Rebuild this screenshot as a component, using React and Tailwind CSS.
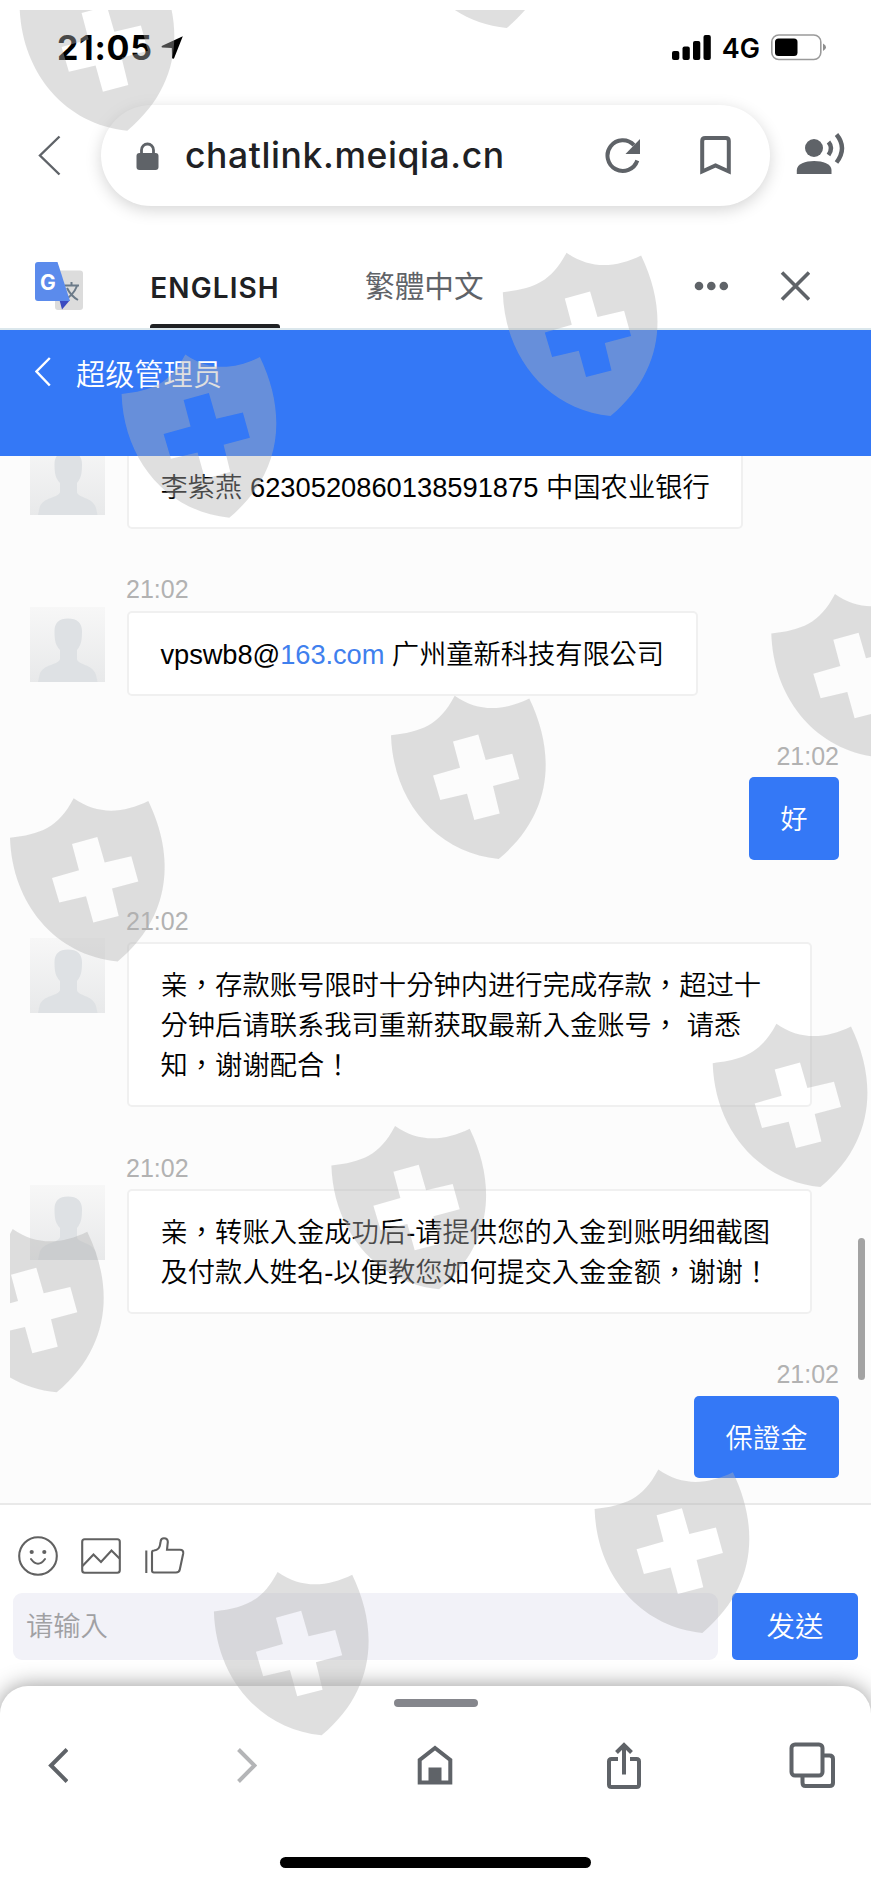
const messages = [
    { id: 1, side: 'left', parts: ['李紫燕 6230520860138591875 中国农业银行'] },
    { id: 2, side: 'left', time: '21:02', parts: ['vpswb8@', { link: '163.com' }, ' 广州童新科技有限公司'] },
    { id: 3, side: 'right', time: '21:02', parts: ['好'] },
    {
        id: 4,
        side: 'left',
        time: '21:02',
        parts: ['亲，存款账号限时十分钟内进行完成存款，超过十\n分钟后请联系我司重新获取最新入金账号， 请悉\n知，谢谢配合！'],
    },
    {
        id: 5,
        side: 'left',
        time: '21:02',
        parts: ['亲，转账入金成功后-请提供您的入金到账明细截图\n及付款人姓名-以便教您如何提交入金金额，谢谢！'],
    },
    { id: 6, side: 'right', time: '21:02', parts: ['保證金'] },
];

// top left corner of every shield on the page
const shields = [
    [19.6, -32.6],
    [399, -135.3],
    [502.8, 252.7],
    [121.6, 354.4],
    [771.3, 594],
    [391, 695.7],
    [10, 798.3],
    [712.7, 1023.7],
    [331.4, 1126],
    [-51, 1229],
    [594.6, 1469.6],
    [213.9, 1572],
];

function Watermark() {
    return (
        <svg className="pointer-events-none absolute inset-0" width="871" height="1884" viewBox="0 0 871 1884" aria-hidden="true">
            <clipPath id="watermark-area">
                <rect x="10" y="10" width="861" height="1874" />
            </clipPath>
            <g clipPath="url(#watermark-area)" fill="#b1b1b1" fillOpacity="0.41" fillRule="evenodd">
                {shields.map(([x, y]) => (
                    <path
                        key={`${x}-${y}`}
                        transform={`translate(${x} ${y})`}
                        d="M0 39.5C30 36 48 30 63.7 0C88 17 113 15 138.3 2.7C165 58 162 118 107.7 163.3C45 157 2 105 0 39.5ZM62 45.7L69 72L42 79.7L49.3 104.3L76 98L83.3 124.3L108.7 117.7L102 90.3L128.3 83.3L121.3 58L94.7 64.3L87.3 38.7Z"
                    />
                ))}
            </g>
        </svg>
    );
}

function StatusBar() {
    return (
        <div className="flex h-[105px] items-start pt-[34px] pr-[44px] pl-[57px] text-black">
            <span className="w-[95px] text-[34px] leading-[28px] font-bold tracking-[0.7px] whitespace-nowrap">21:05</span>
            <svg className="mt-[1px] ml-[9px]" width="24" height="25" viewBox="0 0 24 25">
                <path d="M21.8 1.2L1.2 10.8Q-0.2 12 1.4 12.6L10.8 13L11 22.8Q11.8 24.8 13.2 23Z" />
            </svg>
            <svg className="mt-[1px] ml-auto" width="40" height="26" viewBox="0 0 40 26">
                <rect x="0" y="16" width="7.3" height="9" rx="2" />
                <rect x="10.5" y="11.5" width="7.3" height="13.5" rx="2" />
                <rect x="21" y="6" width="7.3" height="19" rx="2" />
                <rect x="31.5" y="0" width="7.3" height="25" rx="2" />
            </svg>
            <span className="ml-[10px] text-[27px] leading-[30px] font-semibold">4G</span>
            <svg className="ml-[11px]" width="56" height="27" viewBox="0 0 56 27">
                <rect x="0.8" y="1" width="49" height="24.5" rx="7" fill="none" stroke="#9a9a9a" strokeWidth="1.6" />
                <rect x="4" y="4.5" width="22.5" height="17.5" rx="3.5" />
                <path d="M52 9.5Q55 11 55 13.2T52 17Z" fill="#8e8e8e" />
            </svg>
        </div>
    );
}

function AddressBar() {
    return (
        <div className="flex h-[101px] items-center text-[#5f6368]">
            <svg className="ml-[38px]" width="23" height="42" viewBox="0 0 23 42" fill="none" stroke="#5f6368" strokeWidth="2.4">
                <path d="M21.5 1.5L2 20.5L21.5 39.5" />
            </svg>
            <div className="ml-[40px] flex h-[101px] w-[669px] items-center rounded-full bg-white shadow-[0_4px_16px_rgba(0,0,0,0.17)]">
                <svg className="ml-[35px]" width="23" height="28" viewBox="0 0 23 28">
                    <rect x="0.5" y="11" width="22" height="17" rx="3" fill="#5f6368" />
                    <path d="M5.5 12V8a6 6 0 0 1 12 0v4" fill="none" stroke="#5f6368" strokeWidth="2.8" />
                </svg>
                <span className="ml-[26px] w-[340px] text-[35.5px] leading-[44px] font-medium tracking-[0.6px] whitespace-nowrap text-[#202124]">
                    chatlink.meiqia.cn
                </span>
                <svg className="ml-[80px]" width="36" height="36" viewBox="0 0 36 36">
                    <path d="M32.3 22.5A15.3 15.3 0 1 1 29 7.2" fill="none" stroke="#5f6368" strokeWidth="4" />
                    <path d="M35 1V16H20.5Z" fill="#5f6368" />
                </svg>
                <svg className="ml-[59px]" width="31" height="39" viewBox="0 0 31 39" fill="none" stroke="#5f6368" strokeWidth="4">
                    <path d="M2.2 35.5V5Q2.2 2 5.2 2H25.8Q28.8 2 28.8 5V35.5L15.5 29.5Z" />
                </svg>
            </div>
            <svg className="ml-[26px] -mt-[3px]" width="50" height="42" viewBox="0 0 50 42">
                <circle cx="18" cy="15" r="9" fill="#5f6368" />
                <path d="M0.8 41V37C0.8 25 35.5 25 35.5 37V41Z" fill="#5f6368" />
                <path d="M32.5 9Q37.5 15 32.5 22" fill="none" stroke="#5f6368" strokeWidth="4.4" />
                <path d="M40.5 1.5Q51.5 15 40.5 29.5" fill="none" stroke="#5f6368" strokeWidth="4.4" />
            </svg>
        </div>
    );
}

function TranslateBar() {
    return (
        <div className="mt-[44px] flex h-[80px] items-start border-b-2 border-[#dbe7ec]">
            <svg className="mt-[12px] ml-[35px]" width="48" height="48" viewBox="0 0 48 48">
                <rect x="20" y="8.5" width="28" height="39.5" rx="3" fill="#dcdcdc" />
                <path d="M24.5 38H35L27 47.5Z" fill="#3a4bc0" />
                <path d="M29.5 23.5H44M36.5 20V23.5M42 24Q38 34 29 38M32 26Q36 34 43 38" fill="none" stroke="#6b7a88" strokeWidth="2" />
                <path d="M3 0H22.5L35 39H3Q0 39 0 36V3Q0 0 3 0Z" fill="#5b8bec" />
                <text x="5" y="28" fontSize="21" fontWeight="700" fill="#fff">G</text>
            </svg>
            <div className="ml-[67px] flex h-[78px] w-[130px] flex-col items-center justify-between">
                <span className="mt-[22px] text-[28px] leading-[32px] font-semibold tracking-[1.1px] whitespace-nowrap text-[#202124]">
                    ENGLISH
                </span>
                <span className="h-[4px] w-[130px] rounded-t-[3px] bg-[#202124]" />
            </div>
            <span className="mt-[16px] ml-[85px] w-[120px] text-[29.7px] leading-[40px] whitespace-nowrap text-[#5f6368]">繁體中文</span>
            <svg className="mt-[31px] ml-[209px]" width="35" height="10" viewBox="0 0 35 10" fill="#5f6368">
                <circle cx="5" cy="5" r="4.3" />
                <circle cx="17.3" cy="5" r="4.3" />
                <circle cx="29.8" cy="5" r="4.3" />
            </svg>
            <svg className="mt-[21px] ml-[51px]" width="30" height="30" viewBox="0 0 30 30" fill="none" stroke="#5f6368" strokeWidth="3.6">
                <path d="M2 1.5L29 28.5M29 1.5L2 28.5" />
            </svg>
        </div>
    );
}

function Avatar() {
    return (
        <svg className="-mt-[4px] mr-[22px] shrink-0" width="75" height="75" viewBox="0 0 75 75">
            <defs>
                <linearGradient id="avatar-bg" x1="0" y1="0" x2="0" y2="1">
                    <stop offset="0" stopColor="#f7f7f7" />
                    <stop offset="1" stopColor="#e8e9ea" />
                </linearGradient>
            </defs>
            <rect width="75" height="75" fill="url(#avatar-bg)" />
            <path
                d="M38 11.5C29 11.5 24.5 16 24.5 24C24.5 34 25.5 38 30 43V52C29 58 12 57 9.5 68L8 75H67.5L66 68C63 57 47.5 58 47 52V43C51 38 52 34 52 24C52 16 47 11.5 38 11.5Z"
                fill="#dee1e4"
            />
        </svg>
    );
}

function Message({ message }) {
    const isLeft = message.side === 'left';

    return (
        <div className={isLeft ? 'flex flex-col items-start pl-[29.5px]' : 'flex flex-col items-end pr-[32px]'}>
            {message.time && (
                <div
                    className={`h-[81.7px] pt-[46.4px] font-['Liberation_Sans'] text-[25px] leading-[28px] text-[#b2b2b2] ${
                        isLeft ? 'pl-[96.5px]' : ''
                    }`}
                >
                    {message.time}
                </div>
            )}
            <div className="flex items-start">
                {isLeft && <Avatar />}
                <div
                    className={`rounded-[5px] font-['Liberation_Sans','Noto_Sans_CJK_TC',sans-serif] text-[27.3px] leading-[40px] font-[350] whitespace-pre ${
                        isLeft
                            ? 'border-2 border-[#f0f0f0] bg-white pt-[22px] pr-[31.5px] pb-[19.2px] pl-[32px] text-black'
                            : 'bg-[#3478f6] px-[31.5px] pt-[23px] pb-[19.8px] text-white'
                    } ${message.id === 4 || message.id === 5 ? 'w-[685px]' : ''} ${message.id === 2 ? 'tracking-[-0.08px]' : ''}`}
                >
                    {message.parts.map((part, index) =>
                        typeof part === 'string' ? (
                            <span key={index}>{part}</span>
                        ) : (
                            <a key={index} className="text-[#3f80ee]">
                                {part.link}
                            </a>
                        )
                    )}
                </div>
            </div>
        </div>
    );
}

function Composer() {
    return (
        <div className="h-[183px] border-t-2 border-[#e9e9e9] bg-white">
            <div className="flex h-[88px] items-center pt-[13px] pl-[18px]">
                <svg width="40" height="40" viewBox="0 0 40 40" fill="none" stroke="#616161" strokeWidth="2.1">
                    <circle cx="20" cy="20" r="18.8" />
                    <circle cx="13.7" cy="16" r="2.1" fill="#616161" stroke="none" />
                    <circle cx="26.3" cy="16" r="2.1" fill="#616161" stroke="none" />
                    <path d="M13 23Q20 32.5 27 23" strokeLinecap="round" />
                </svg>
                <svg className="ml-[23px]" width="40" height="36" viewBox="0 0 40 36" fill="none" stroke="#616161" strokeWidth="2.1">
                    <rect x="1.2" y="1.2" width="37.6" height="33.6" rx="2.5" />
                    <path d="M1.5 28L12.5 16.5L20 24L30.5 12.5L38.5 20.5" />
                </svg>
                <svg className="ml-[24px]" width="40" height="37" viewBox="0 0 40 37" fill="none" stroke="#616161" strokeWidth="2.1">
                    <path d="M1.3 13.5V36M7 15.5Q7 13.5 9 13.5Q14.6 13 15.2 7L15.6 4.5Q16 1.3 19 1.3Q22.8 1.3 22.8 5L22 12.8H35Q38.7 12.8 38.2 16.5L34.8 32.5Q34.2 35.5 31 35.5H9Q7 35.5 7 33.5Z" />
                </svg>
            </div>
            <div className="flex h-[67px] gap-[14px] pl-[13px]">
                <div className="flex w-[705px] items-center rounded-[9px] bg-[#f2f2f8] pt-[2px] pl-[13px] text-[27.3px] font-[350] text-[#a0a0a3]">
                    请输入
                </div>
                <button type="button" className="w-[126px] rounded-[5px] bg-[#3478f6] pt-px text-[28.5px] font-[350] text-white">
                    发送
                </button>
            </div>
        </div>
    );
}

function BottomBar() {
    return (
        <div className="relative h-[198px] rounded-t-[28px] bg-white shadow-[0_0_22px_rgba(0,0,0,0.42)]">
            <div className="flex justify-center pt-[13px]">
                <div className="h-[8px] w-[84px] rounded-full bg-[#85868c]" />
            </div>
            <div className="mt-[28px] flex h-[60px] items-center justify-between pr-[29px] pl-[28px] text-[#5f6368]">
                <div className="flex w-[60px] justify-center">
                    <svg width="20" height="36" viewBox="0 0 20 36" fill="none" stroke="#5f6368" strokeWidth="4">
                        <path d="M19 2.5L3 18.5L19 34.5" />
                    </svg>
                </div>
                <div className="flex w-[60px] justify-center">
                    <svg width="20" height="36" viewBox="0 0 20 36" fill="none" stroke="#b4b5b7" strokeWidth="4">
                        <path d="M1.5 2.5L17.5 18.5L1.5 34.5" />
                    </svg>
                </div>
                <div className="flex w-[60px] justify-center">
                    <svg width="36" height="40" viewBox="0 0 36 40">
                        <path d="M2.7 37.5V15L18 3L33.3 15V37.5Z" fill="none" stroke="#5f6368" strokeWidth="4" />
                        <rect x="11.5" y="22.5" width="13" height="16" fill="#5f6368" />
                    </svg>
                </div>
                <div className="flex w-[60px] justify-center">
                    <svg width="36" height="48" viewBox="0 0 36 48" fill="none" stroke="#5f6368" strokeWidth="4">
                        <path d="M12 18H5.5Q3 18 3 20.5V43.5Q3 46 5.5 46H30.5Q33 46 33 43.5V20.5Q33 18 30.5 18H24M18 33.5V4M10.5 11.5L18 4L25.5 11.5" />
                    </svg>
                </div>
                <div className="flex w-[60px] justify-center">
                    <svg width="46" height="46" viewBox="0 0 46 46" fill="none" stroke="#5f6368" strokeWidth="4">
                        <rect x="2.5" y="2.5" width="31" height="31" rx="3.5" />
                        <path d="M34 13.5H40.5Q44 13.5 44 17V41Q44 44 40.5 44H16.5Q13.5 44 13.5 40.5V34" />
                    </svg>
                </div>
            </div>
            <div className="mt-[61.5px] flex justify-center">
                <div className="h-[11px] w-[311px] rounded-full bg-black" />
            </div>
        </div>
    );
}

export default function App() {
    return (
        <div className="relative flex h-[1884px] w-[871px] flex-col overflow-hidden bg-white font-['Inter','Noto_Sans_CJK_TC',sans-serif]">
            <StatusBar />
            <AddressBar />
            <TranslateBar />
            <header className="flex h-[126px] items-start bg-[#3478f6] pt-[24px] pl-[35px] text-white">
                <svg className="mt-[3px]" width="16" height="30" viewBox="0 0 16 30" fill="none" stroke="#fff" strokeWidth="2.4">
                    <path d="M14.8 1L1.5 14.5L14.8 28.5" />
                </svg>
                <h1 className="mt-[1px] ml-[25px] text-[29.2px] leading-[40px] font-[350]">超级管理员</h1>
            </header>
            <main className="relative h-[1047px] overflow-hidden bg-[#fcfcfc]">
                <div className="-mt-[12.3px]">
                    {messages.map((message) => (
                        <Message key={message.id} message={message} />
                    ))}
                </div>
                <div className="absolute top-[782px] right-[6.5px] h-[142px] w-[6.5px] rounded-full bg-[#a3a3a3]" />
            </main>
            <Composer />
            <BottomBar />
            <Watermark />
        </div>
    );
}
